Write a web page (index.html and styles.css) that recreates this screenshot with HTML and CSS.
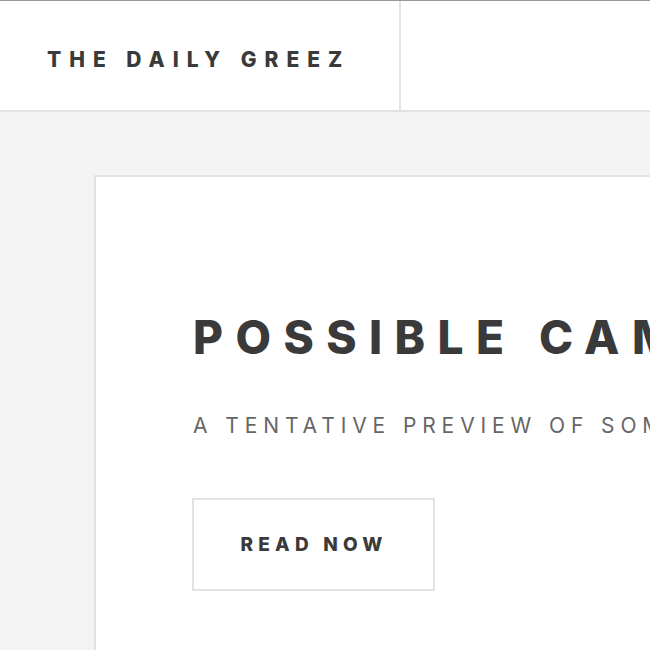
FILE: index.html
```html
<!DOCTYPE html>
<html>
<head>
<meta charset="utf-8">
<link rel="stylesheet" href="styles.css">
</head>
<body>
<header class="topbar">
  <div class="brand">THE DAILY GREEZ</div>
  <div class="topbar-rest"></div>
</header>
<main class="main">
  <article class="card">
    <h1 class="title">POSSIBLE CAMERA FEATURES</h1>
    <p class="subtitle">A TENTATIVE PREVIEW OF SOME UPCOMING FEATURES</p>
    <a class="btn">READ NOW</a>
  </article>
</main>
</body>
</html>
```
FILE: styles.css
```css
html, body {
  margin: 0;
  padding: 0;
  background: #f3f3f3;
  overflow: hidden;
  width: 650px;
  height: 650px;
}
body {
  font-family: "Inter", "Lato", "Liberation Sans", sans-serif;
  color: #3a3a3a;
}
.topbar {
  display: flex;
  background: #fff;
  border-top: 1px solid #9a9a9a;
  border-bottom: 2px solid #e2e2e2;
  height: 109px;
}
.brand {
  width: 352px;
  flex: none;
  border-right: 2px solid #e2e2e2;
  display: flex;
  align-items: center;
  padding-left: 47px;
  padding-top: 7px;
  box-sizing: content-box;
  font-size: 21px;
  font-weight: 800;
  letter-spacing: 8px;
  white-space: nowrap;
  color: #3a3a3a;
}
.topbar-rest {
  flex: 1;
}
.main {
  padding: 63px 0 0 94px;
}
.card {
  width: 556px;
  height: 475px;
  overflow: hidden;
  background: #fff;
  border: 2px solid #e2e2e2;
  border-right: none;
  border-bottom: none;
  padding: 130px 0 0 96px;
  box-sizing: border-box;
}
.title {
  margin: 0;
  padding-left: 1px;
  font-size: 46px;
  line-height: 60px;
  font-weight: 800;
  letter-spacing: 0.27em;
  white-space: nowrap;
  color: #3a3a3a;
}
.subtitle {
  margin: 45px 0 0;
  padding-left: 1px;
  font-size: 21px;
  line-height: 28px;
  font-weight: 400;
  letter-spacing: 5.9px;
  color: #666;
  white-space: nowrap;
}
.btn {
  display: flex;
  align-items: center;
  justify-content: center;
  margin-top: 58px;
  width: 243px;
  height: 93px;
  box-sizing: border-box;
  border: 2px solid #e2e2e2;
  font-size: 19px;
  font-weight: 800;
  letter-spacing: 5.2px;
  color: #3a3a3a;
  white-space: nowrap;
  padding-left: 1px;
}
```
